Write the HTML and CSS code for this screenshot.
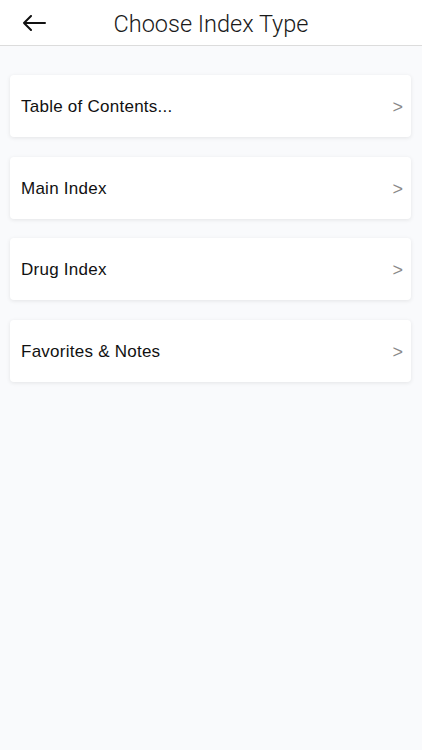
FILE: index.html
```html
<!DOCTYPE html>
<html>
<head>
<meta charset="utf-8">
<link rel="stylesheet" href="styles.css">
</head>
<body>
<header class="topbar">
  <button class="back" aria-label="Back">
    <svg width="24" height="16" viewBox="0 0 24 16"><path d="M23 8H2M9 1L2 8l7 7" fill="none" stroke="#111" stroke-width="2" stroke-linecap="round" stroke-linejoin="round"/></svg>
  </button>
  <h1 class="title">Choose Index Type</h1>
</header>
<main class="list">
  <a class="card"><span class="label">Table of Contents...</span><span class="chev">&gt;</span></a>
  <a class="card"><span class="label">Main Index</span><span class="chev">&gt;</span></a>
  <a class="card"><span class="label">Drug Index</span><span class="chev">&gt;</span></a>
  <a class="card"><span class="label">Favorites &amp; Notes</span><span class="chev">&gt;</span></a>
</main>
</body>
</html>
```
FILE: styles.css
```css
html, body {
  margin: 0;
  padding: 0;
  height: 100%;
  background: #f9fafc;
  font-family: "Liberation Sans", Arial, sans-serif;
}
.topbar {
  height: 45px;
  background: #ffffff;
  border-bottom: 1px solid #dcdcdc;
  display: flex;
  align-items: center;
  position: relative;
}
.back {
  border: 0;
  background: none;
  padding: 0;
  margin-left: 22px;
  width: 24px;
  height: 16px;
  display: flex;
  align-items: center;
  margin-top: 1px;
}
.title {
  position: absolute;
  left: 0;
  right: 0;
  top: 0;
  margin: 0;
  text-align: center;
  line-height: 49px;
  font-family: Roboto, "Liberation Sans", sans-serif;
  font-weight: 300;
  font-size: 23.5px;
  color: #1a1a1a;
  pointer-events: none;
}
.list {
  display: flex;
  flex-direction: column;
  gap: 19.5px;
  padding: 29px 11px 0 10px;
}
.card {
  height: 62px;
  background: #ffffff;
  border-radius: 4px;
  box-shadow: 0 1px 4px rgba(0, 0, 0, 0.09);
  display: flex;
  align-items: center;
  justify-content: space-between;
  padding: 0 8px 0 11px;
  color: #111;
}
.label {
  font-size: 17px;
  letter-spacing: 0.25px;
  margin-top: 2px;
}
.chev {
  font-size: 18px;
  color: #8a8a8a;
  margin-top: 3px;
  font-family: "Liberation Sans", Arial, sans-serif;
}
```
